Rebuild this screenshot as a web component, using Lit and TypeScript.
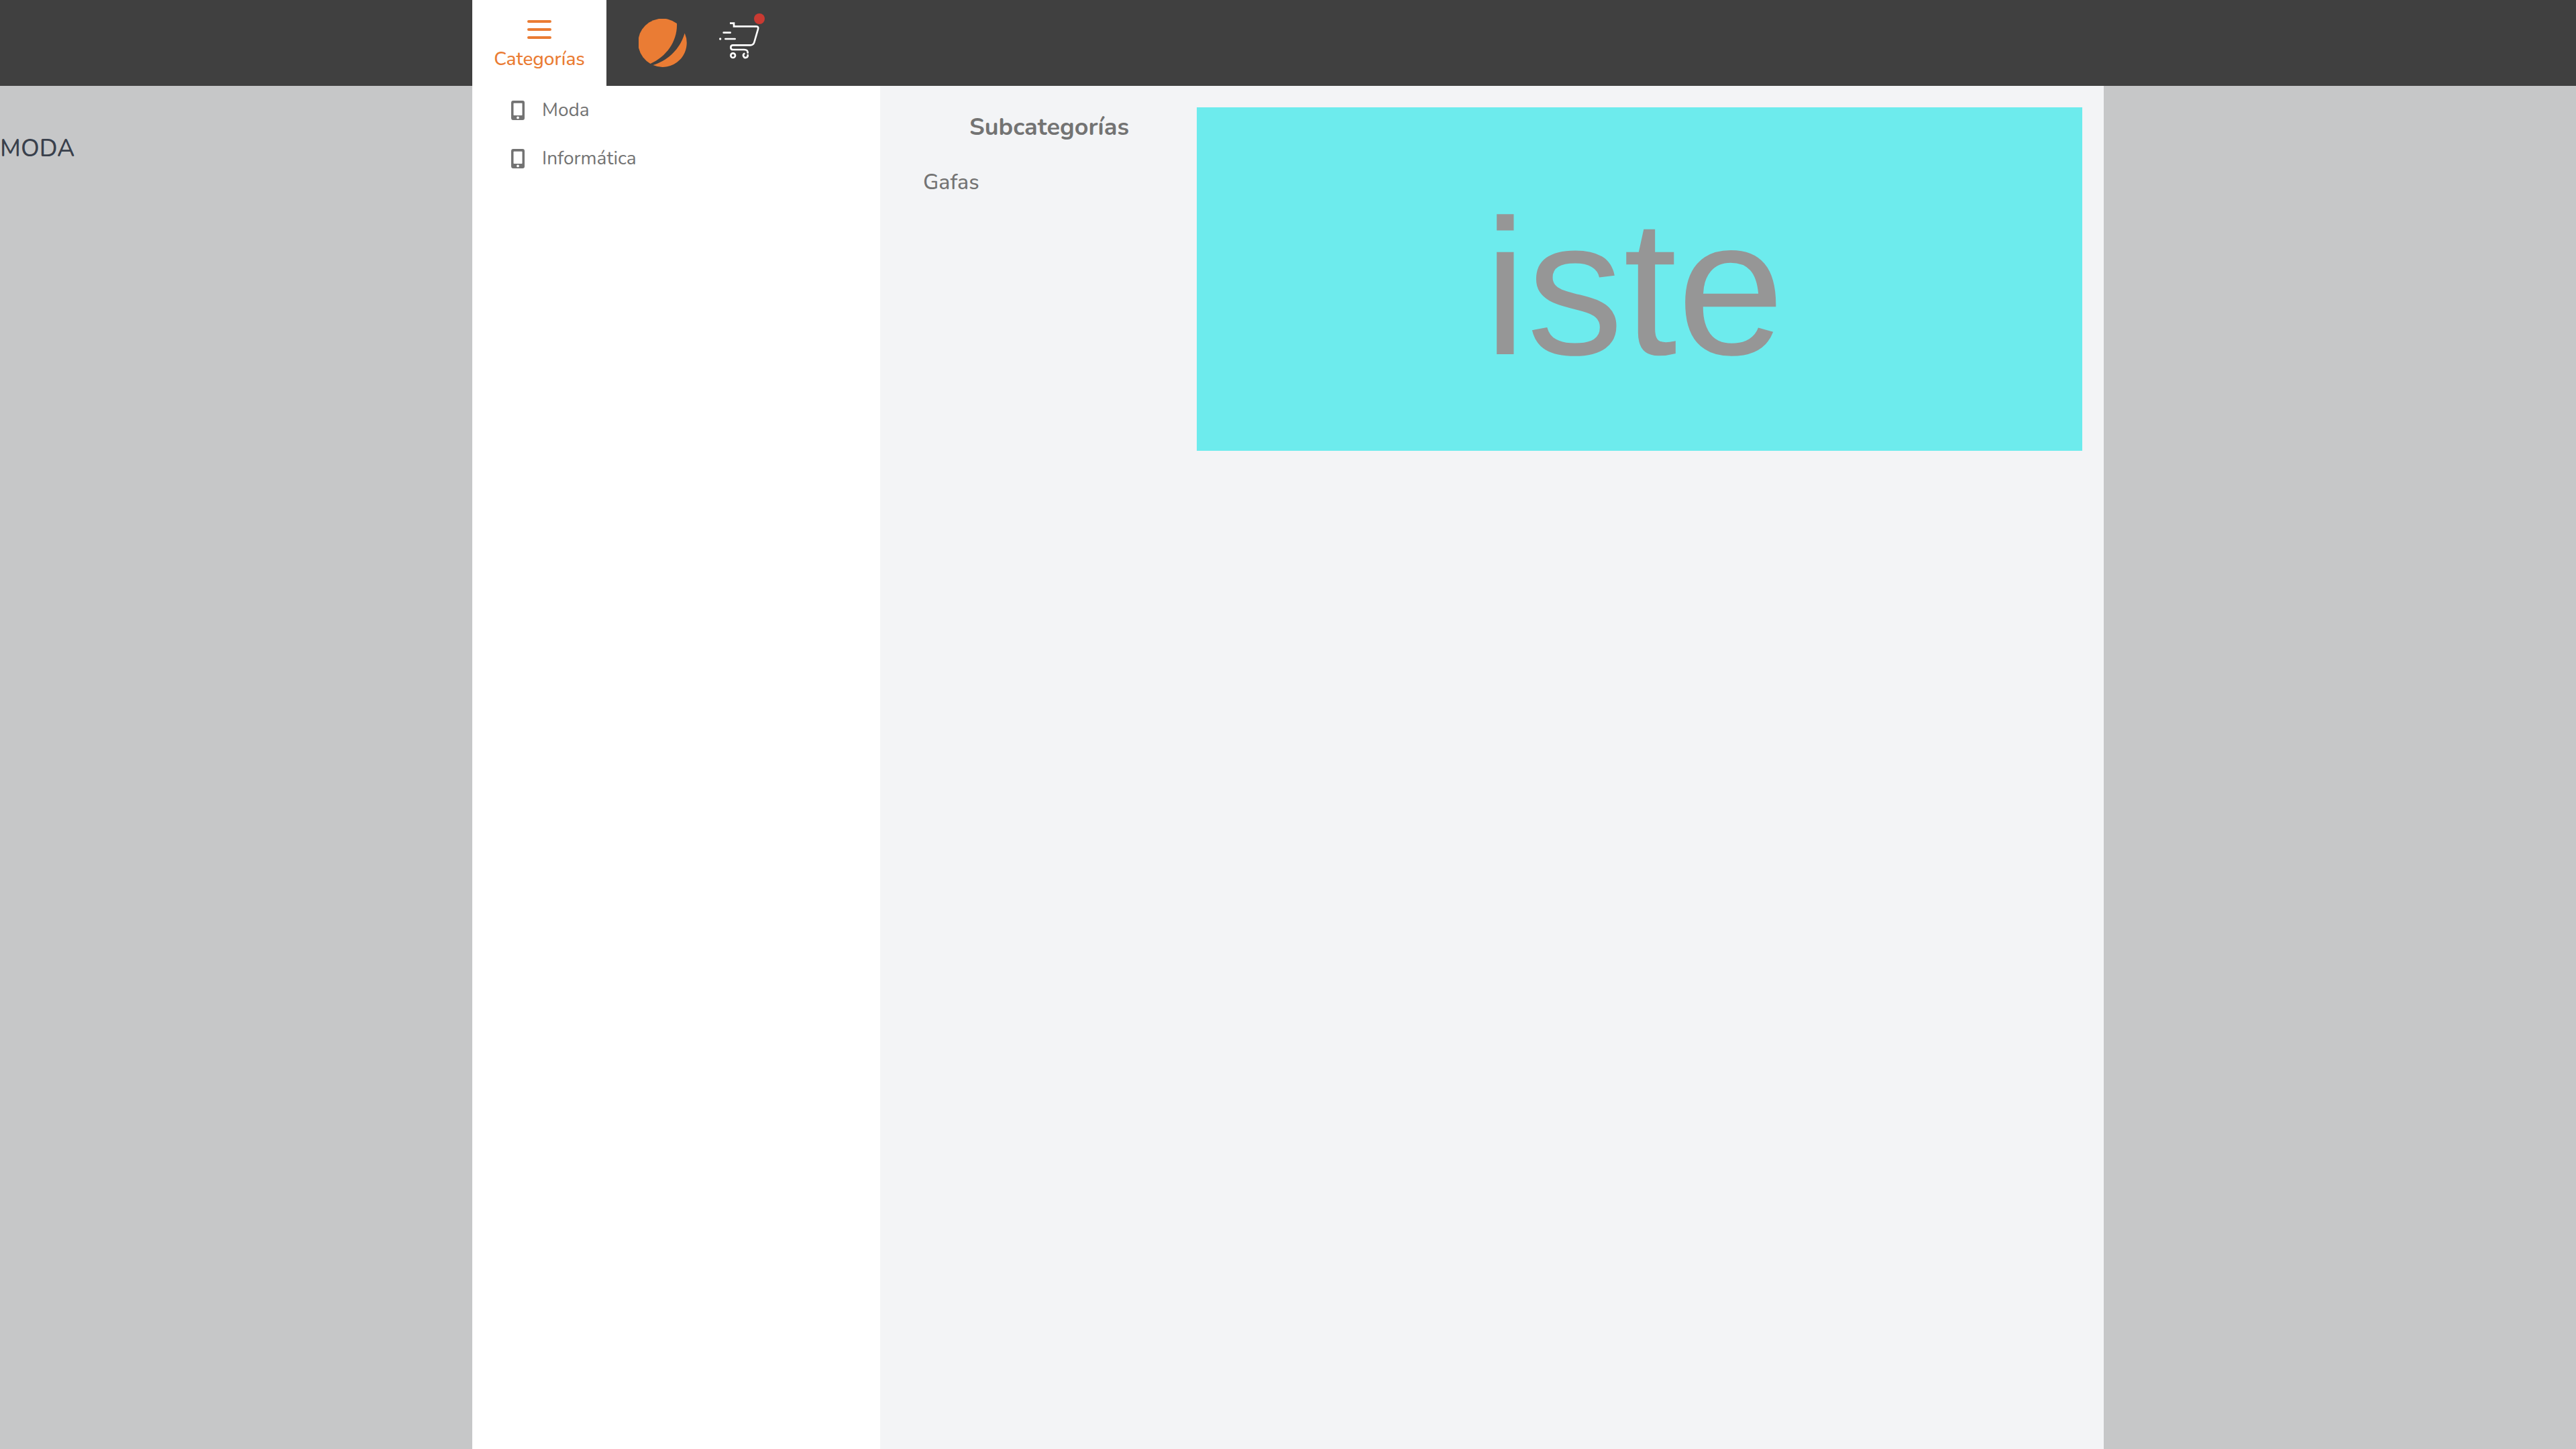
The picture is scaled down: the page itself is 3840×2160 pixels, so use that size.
import { LitElement, html, css, svg } from "lit";
import { customElement, state } from "lit/decorators.js";

interface Category {
  name: string;
  subcategories: string[];
  banner: string;
}

const CATEGORIES: Category[] = [
  { name: "Moda", subcategories: ["Gafas"], banner: "iste" },
  { name: "Informática", subcategories: [], banner: "" },
];

const mobileIcon = svg`
  <svg class="mobile" viewBox="0 0 20 29" aria-hidden="true">
    <path fill="currentColor" fill-rule="evenodd"
      d="M3 0H17A3 3 0 0 1 20 3V26A3 3 0 0 1 17 29H3A3 3 0 0 1 0 26V3A3 3 0 0 1 3 0ZM4.200 3.800A.7 .7 0 0 0 3.500 4.500V21.300A.7 .7 0 0 0 4.200 22H15.800A.7 .7 0 0 0 16.500 21.300V4.500A.7 .7 0 0 0 15.800 3.800ZM10 23.500A1.900 1.900 0 1 0 10 27.300A1.900 1.900 0 1 0 10 23.500Z"/>
  </svg>`;

@customElement("app-root")
export class AppRoot extends LitElement {
  @state() private open = true;
  @state() private active = 0;

  static styles = css`
    :host {
      display: flex;
      flex-direction: column;
      min-height: 100vh;
      background: #f3f4f6;
      color: #374151;
      font-family: Nunito, Lato, "Open Sans", sans-serif;
      font-size: 28px;
      line-height: 40px;
    }
    * {
      box-sizing: border-box;
    }
    button {
      border: 0;
      background: none;
      font: inherit;
      color: inherit;
      cursor: pointer;
    }
    a {
      color: inherit;
      text-decoration: none;
    }
    ul {
      list-style: none;
      margin: 0;
      padding: 0;
    }
    .header {
      background: #404040;
    }
    .container {
      width: 100%;
      max-width: 2432px;
      margin: 0 auto;
    }
    .bar {
      display: flex;
      align-items: center;
      height: 128px;
      gap: 48px;
    }
    .toggle {
      display: flex;
      flex-direction: column;
      align-items: center;
      justify-content: center;
      align-self: stretch;
      width: 200px;
      padding: 0;
      background: #fff;
      color: #ea7c34;
      font-weight: 500;
    }
    .burger {
      width: 48px;
      height: 48px;
    }
    .logo,
    .logo svg {
      display: block;
      width: 72px;
      height: 72px;
    }
    .cart {
      position: relative;
      display: block;
    }
    .cart svg {
      display: block;
      width: 64px;
      height: 64px;
    }
    .dot {
      position: absolute;
      top: -12px;
      left: 52px;
      width: 16px;
      height: 16px;
      border-radius: 50%;
      background: #c93a32;
    }
    .stage {
      display: grid;
      flex: 1;
    }
    .page,
    .overlay {
      grid-area: 1 / 1;
    }
    .page {
      padding: 64px 0;
    }
    .title {
      margin: 0;
      font-size: 36px;
      line-height: 60px;
      font-weight: 500;
      text-transform: uppercase;
    }
    .overlay {
      display: flex;
      z-index: 1;
      background: rgb(64 64 64 / 25%);
    }
    .panel {
      display: grid;
      grid-template-columns: 1fr 3fr;
      color: #737373;
    }
    .menu {
      background: #fff;
    }
    .item {
      display: flex;
      align-items: center;
      width: 100%;
      padding: 16px 32px;
      text-align: left;
    }
    .icon {
      display: flex;
      justify-content: center;
      width: 72px;
    }
    .mobile {
      width: 20px;
      height: 29px;
    }
    .detail {
      display: grid;
      grid-template-columns: 1fr 3fr;
      align-items: start;
      padding: 32px;
      background: #f3f4f6;
    }
    .heading {
      margin: 0 0 20px;
      font-size: 36px;
      line-height: 60px;
      font-weight: 700;
      text-align: center;
    }
    .sub {
      display: block;
      padding: 8px 32px;
      font-size: 32px;
      line-height: 48px;
      font-weight: 500;
    }
    .banner {
      display: flex;
      align-items: center;
      justify-content: center;
      height: 512px;
      padding: 24px 16px 0 0;
      background: #6debed;
      color: #969696;
      font-family: "Liberation Sans", sans-serif;
      font-size: 288px;
      line-height: 1;
    }
  `;

  render() {
    const current = CATEGORIES[this.active];
    return html`
      <header class="header">
        <div class="container bar">
          <button
            class="toggle"
            aria-expanded=${this.open}
            @click=${() => (this.open = !this.open)}
          >
            <svg class="burger" viewBox="0 0 24 24" fill="none" stroke="currentColor"
              stroke-width="2" stroke-linecap="round" aria-hidden="true">
              <path d="M4 6H20M4 12H20M4 18H20" />
            </svg>
            <span>Categorías</span>
          </button>
          <a class="logo" href="#" aria-label="Inicio">
            <svg viewBox="0 0 72 72" fill="#ea7c34" aria-hidden="true">
              <path d="M57 7A36 36 0 1 0 17.500 67C42 56 58 33 57 7Z" />
              <path d="M68.700 21.500A36 36 0 0 1 21.500 69C45 62 62 44 68.700 21.500Z" />
            </svg>
          </a>
          <a class="cart" href="#" aria-label="Carrito">
            <svg viewBox="66 96 192 192" fill="none" stroke="#fff" stroke-width="8"
              stroke-linecap="round" stroke-linejoin="round" aria-hidden="true">
              <path stroke-linecap="butt" stroke-linejoin="miter"
                d="M114 104H132V118H228" />
              <path d="M228 118H232Q243 118 240 130L223 189Q219 202 205 202H128Q118 202 118 212T128 222H178Q194 222 194 236" />
              <circle cx="128" cy="248" r="10" />
              <path d="M178 240A10 10 0 1 0 194 246" />
              <path d="M86 146H116M94 174H137" />
              <circle cx="71" cy="174" r="5" fill="#fff" stroke="none" />
            </svg>
            <span class="dot"></span>
          </a>
        </div>
      </header>
      <div class="stage">
        <main class="page"><h1 class="title">Moda</h1></main>
        ${this.open
          ? html`<nav class="overlay" aria-label="Categorías">
              <div class="container panel">
                <ul class="menu">
                  ${CATEGORIES.map(
                    (category, i) => html`<li>
                      <button class="item" @click=${() => (this.active = i)}>
                        <span class="icon">${mobileIcon}</span>
                        <span>${category.name}</span>
                      </button>
                    </li>`
                  )}
                </ul>
                <section class="detail">
                  <div>
                    <h2 class="heading">Subcategorías</h2>
                    <ul>
                      ${current.subcategories.map(
                        (name) => html`<li><a class="sub" href="#">${name}</a></li>`
                      )}
                    </ul>
                  </div>
                  <div class="banner">${current.banner}</div>
                </section>
              </div>
            </nav>`
          : null}
      </div>
    `;
  }
}
